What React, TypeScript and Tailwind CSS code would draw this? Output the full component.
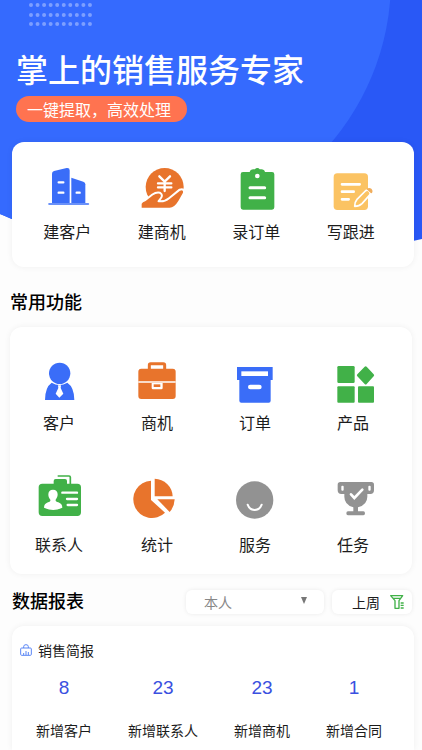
import type { ReactNode } from "react";

type Item = { label: string; icon: ReactNode };

function Icon({ viewBox, children }: { viewBox: string; children: ReactNode }) {
  return (
    <svg viewBox={viewBox} className="h-12 w-12 overflow-visible" fill="none" aria-hidden="true">
      {children}
    </svg>
  );
}

const quickActions: Item[] = [
  {
    label: "建客户",
    icon: (
      <Icon viewBox="130 81 144 144">
        <path d="M157 113q0-6 6-8l38-9q9-1 9 7v98h-53z" fill="#3a6df8" />
        <path d="M215 125l36 12q6 2 6 8v56h-42z" fill="#3a6df8" />
        <path d="M148 204h118" stroke="#3a6df8" strokeWidth="5" strokeLinecap="round" />
        <path d="M177 139h14M177 170h14M231 170h9" stroke="#fff" strokeWidth="7" strokeLinecap="round" />
      </Icon>
    ),
  },
  {
    label: "建商机",
    icon: (
      <Icon viewBox="413 81 144 144">
        <circle cx="493" cy="153" r="57" fill="#e8742c" />
        <path
          d="M424 215v-12q2-5 12-8l22-17q10-7 20-5 7 4 1 12l-7 9q-2 5 6 5 17 1 30-10l31-25q11-5 9 6l-14 25q-12 20-26 20z"
          fill="#e8742c"
          stroke="#fff"
          strokeWidth="12"
          strokeLinejoin="round"
          paintOrder="stroke"
        />
        <path
          d="M477 121l16 16 16-16M493 138v27M473 142h40M473 154h40"
          stroke="#fff"
          strokeWidth="7"
          strokeLinecap="round"
        />
      </Icon>
    ),
  },
  {
    label: "录订单",
    icon: (
      <Icon viewBox="64 81 144 144">
        <path
          d="M97 108h20q2-8 11-8h5q2-4 7-4t7 4h5q9 0 11 8h21q7 0 7 7v99q0 7-7 7H97q-7 0-7-7v-99q0-7 7-7z"
          fill="#41b148"
        />
        <circle cx="140" cy="120" r="7" fill="#fff" />
        <path d="M118 155h44M118 185h44" stroke="#fff" strokeWidth="9" strokeLinecap="round" />
      </Icon>
    ),
  },
  {
    label: "写跟进",
    icon: (
      <Icon viewBox="347 81 144 144">
        <rect x="367" y="112" width="103" height="110" rx="11" fill="#fbc363" />
        <path d="M392 145h53M392 167h35M392 190h20" stroke="#fff" strokeWidth="8" strokeLinecap="round" />
        <path
          d="M430 211q0-13 7-21l25-25q6-5 12 1t0 12l-22 25q-8 8-22 8z"
          fill="#fbc363"
          stroke="#fff"
          strokeWidth="5"
          strokeLinejoin="round"
        />
        <path d="M467 158q7-5 14 1 5 6 1 12l-3 1-13-12z" fill="#f0ad5c" />
      </Icon>
    ),
  },
];

const features: Item[] = [
  {
    label: "客户",
    icon: (
      <Icon viewBox="105 222 144 144">
        <circle cx="179" cy="280" r="32" fill="#3a6df8" />
        <path d="M135 360q0-38 20-52 23 14 47 0 21 14 21 52z" fill="#3a6df8" />
        <path d="M174 316h9l-1 8 8 17-12 12-11-12 8-17z" fill="#fff" />
      </Icon>
    ),
  },
  {
    label: "商机",
    icon: (
      <Icon viewBox="399 222 144 144">
        <path d="M448 270v-15q0-4 4-4h38q4 0 4 4v15" stroke="#e8742c" strokeWidth="9" />
        <rect x="415" y="266" width="112" height="91" rx="9" fill="#e8742c" />
        <path d="M415 306h112" stroke="#fff" strokeWidth="5" />
        <path d="M455 309v15q0 4 4 4h25q4 0 4-4v-15z" fill="#fff" />
        <path d="M461 313h20v8h-20z" fill="#e8742c" />
      </Icon>
    ),
  },
  {
    label: "订单",
    icon: (
      <Icon viewBox="60 222 144 144">
        <path d="M78 261h107v39h-6v62q0 6-6 6H91q-6 0-6-6v-62h-7z" fill="#3a6df8" />
        <path d="M91 274h80v14H91z" fill="#fff" />
        <rect x="111" y="314" width="41" height="14" rx="7" fill="#fff" />
      </Icon>
    ),
  },
  {
    label: "产品",
    icon: (
      <Icon viewBox="354 222 144 144">
        <rect x="379" y="258" width="52" height="51" rx="4" fill="#41b148" />
        <rect x="379" y="319" width="52" height="49" rx="3" fill="#41b148" />
        <rect x="441" y="319" width="48" height="49" rx="3" fill="#41b148" />
        <path d="M461 260q3-3 6 0l21 23q3 3 0 6l-21 23q-3 3-6 0l-22-23q-3-3 0-6z" fill="#41b148" />
      </Icon>
    ),
  },
  {
    label: "联系人",
    icon: (
      <Icon viewBox="105 108 144 144">
        <path d="M173 108h34q4 0 4 4v22" stroke="#41b148" strokeWidth="5" />
        <path d="M127 131h34v-8q0-6 6-6h28q6 0 6 6v8h31q11 0 11 11v75q0 11-11 11H127q-11 0-11-11v-75q0-11 11-11z" fill="#41b148" />
        <path
          d="M159 149c9 0 14 6 14 14 0 7-3 12-6 16-1 4 2 6 8 8 8 3 12 8 12 16q-27 14-55 0c0-8 4-13 12-16 6-2 8-4 7-8-4-4-6-9-6-16 0-8 5-14 14-14z"
          fill="#fff"
        />
        <path d="M187 158h44M201 177h30M203 195h28" stroke="#fff" strokeWidth="7" strokeLinecap="round" />
      </Icon>
    ),
  },
  {
    label: "统计",
    icon: (
      <Icon viewBox="399 108 144 144">
        <path d="M453 122v58l42 38A56 56 0 1 1 453 122z" fill="#e8742c" />
        <path d="M464 116a55 55 0 0 1 54 53h-54z" fill="#e8742c" />
        <path d="M472 178h52q-1 23-15 38z" fill="#e8742c" />
      </Icon>
    ),
  },
  {
    label: "服务",
    icon: (
      <Icon viewBox="60 108 144 144">
        <circle cx="131" cy="180" r="56" fill="#929292" />
        <path d="M110 194c7 21 35 21 42 0" stroke="#fff" strokeWidth="6" strokeLinecap="round" />
      </Icon>
    ),
  },
  {
    label: "任务",
    icon: (
      <Icon viewBox="354 108 144 144">
        <path
          d="M388 126h93q8 0 8 8v17q0 11-11 11h-9v8q0 24-28 32v12h16q5 0 5 6t-5 6h-46q-5 0-5-6t5-6h16v-12q-27-8-27-32v-8h-9q-11 0-11-11v-17q0-8 8-8z"
          fill="#929292"
        />
        <rect x="391" y="137" width="7" height="15" rx="3" fill="#fff" />
        <rect x="472" y="137" width="7" height="15" rx="3" fill="#fff" />
        <path d="M420 163l10 11 24-25" stroke="#fff" strokeWidth="8" strokeLinecap="round" />
      </Icon>
    ),
  },
];

const stats = [
  { label: "新增客户", value: 8 },
  { label: "新增联系人", value: 23 },
  { label: "新增商机", value: 23 },
  { label: "新增合同", value: 1 },
];

function Tile({ label, icon }: Item) {
  return (
    <button type="button" className="flex flex-col items-center gap-2">
      {icon}
      <span className="text-base leading-6">{label}</span>
    </button>
  );
}

function HeroBackdrop() {
  const rows = [5, 15, 24];
  return (
    <div className="absolute inset-x-0 top-0 -z-10" aria-hidden="true">
      <svg viewBox="0 0 422 270" preserveAspectRatio="none" className="h-[270px] w-full">
        <defs>
          <clipPath id="hero">
            <path d="M0 0H422V239C300 268 80 250 0 214z" />
          </clipPath>
        </defs>
        <g clipPath="url(#hero)">
          <rect width="422" height="270" fill="#2958f6" />
          <circle cx="140" cy="-20" r="251" fill="#356afe" />
          <path d="M0 150H230V270H0z" fill="#356afe" />
        </g>
        {rows.map((y) => (
          <path
            key={y}
            d={`M31 ${y}h60`}
            stroke="#7d9fff"
            strokeWidth="4"
            strokeLinecap="round"
            strokeDasharray="0 6.55"
          />
        ))}
      </svg>
    </div>
  );
}

export default function App() {
  return (
    <main className="relative isolate flex min-h-screen flex-col bg-[#fdfdfd] font-['Noto_Sans_CJK_SC',sans-serif] text-[#1c1c1c]">
      <HeroBackdrop />

      <header className="px-4 pt-12 text-white">
        <h1 className="text-[32px] font-medium leading-10">掌上的销售服务专家</h1>
        <p className="mt-2 w-fit rounded-full bg-[#ff7350] pl-[11px] pr-4 text-base leading-[26px]">
          一键提取，高效处理
        </p>
      </header>

      <section className="ml-3 mr-2 mt-5 grid grid-cols-4 rounded-xl bg-white pb-6 pl-2 pr-4 pt-[21px] shadow-[0_0_6px_rgba(0,0,0,0.06)]">
        {quickActions.map((item) => (
          <Tile key={item.label} {...item} />
        ))}
      </section>

      <h2 className="mb-3 ml-[10px] mt-5 text-lg font-medium leading-7 text-black">常用功能</h2>
      <section className="mx-[10px] grid grid-cols-4 gap-y-[42px] rounded-xl bg-white pb-[18px] pr-[10px] pt-[27px] shadow-[0_0_6px_rgba(0,0,0,0.06)]">
        {features.map((item) => (
          <Tile key={item.label} {...item} />
        ))}
      </section>

      <div className="my-3 ml-3 mr-[10px] flex items-end gap-2">
        <h2 className="mr-auto text-lg font-medium leading-7 text-black">数据报表</h2>
        <div className="relative">
          <select
            aria-label="人员范围"
            className="h-6 w-[138px] appearance-none rounded-md bg-white pl-[18px] text-sm leading-6 text-[#888] shadow-[0_0_4px_rgba(0,0,0,0.08)]"
          >
            <option>本人</option>
          </select>
          <svg
            viewBox="0 0 8 8"
            className="pointer-events-none absolute right-4 top-2 h-2 w-2"
            fill="#777"
            aria-hidden="true"
          >
            <path d="M1 0h6L4 7z" />
          </svg>
        </div>
        <button
          type="button"
          className="flex h-6 w-20 items-center justify-end gap-[10px] rounded-md bg-white pr-2 text-sm shadow-[0_0_4px_rgba(0,0,0,0.08)]"
        >
          上周
          <svg viewBox="0 0 42 42" className="h-[14px] w-[14px]" fill="none" stroke="#41b148" strokeWidth="4" aria-hidden="true">
            <path d="M2 2h36l-11 15v23H15V17z" strokeLinejoin="round" />
            <path d="M9 10h22M32 24h9M32 31h9M32 39h9" />
          </svg>
        </button>
      </div>

      <section className="ml-3 mr-2 flex-1 rounded-t-xl bg-white pt-[14px] shadow-[0_0_6px_rgba(0,0,0,0.06)]">
        <h3 className="flex items-center gap-[6px] pl-2 text-sm leading-5">
          <svg viewBox="0 0 36 36" className="h-3 w-3" fill="none" stroke="#5b86f5" strokeWidth="3" aria-hidden="true">
            <path d="M11 12V8q0-6 7-6t7 6v4M5 12h26q3 0 3 3v16q0 3-3 3H5q-3 0-3-3V15q0-3 3-3z" />
            <path d="M11 33v-6M18 33V21M25 33v-9" />
          </svg>
          销售简报
        </h3>
        <dl className="flex justify-between pl-6 pr-8 pt-[14px] text-center">
          {stats.map((stat) => (
            <div key={stat.label} className="flex flex-col-reverse gap-[18px]">
              <dt className="text-sm leading-5">{stat.label}</dt>
              <dd className="font-['Liberation_Sans',sans-serif] text-[19px] leading-7 text-[#3a50e0]">{stat.value}</dd>
            </div>
          ))}
        </dl>
      </section>
    </main>
  );
}
